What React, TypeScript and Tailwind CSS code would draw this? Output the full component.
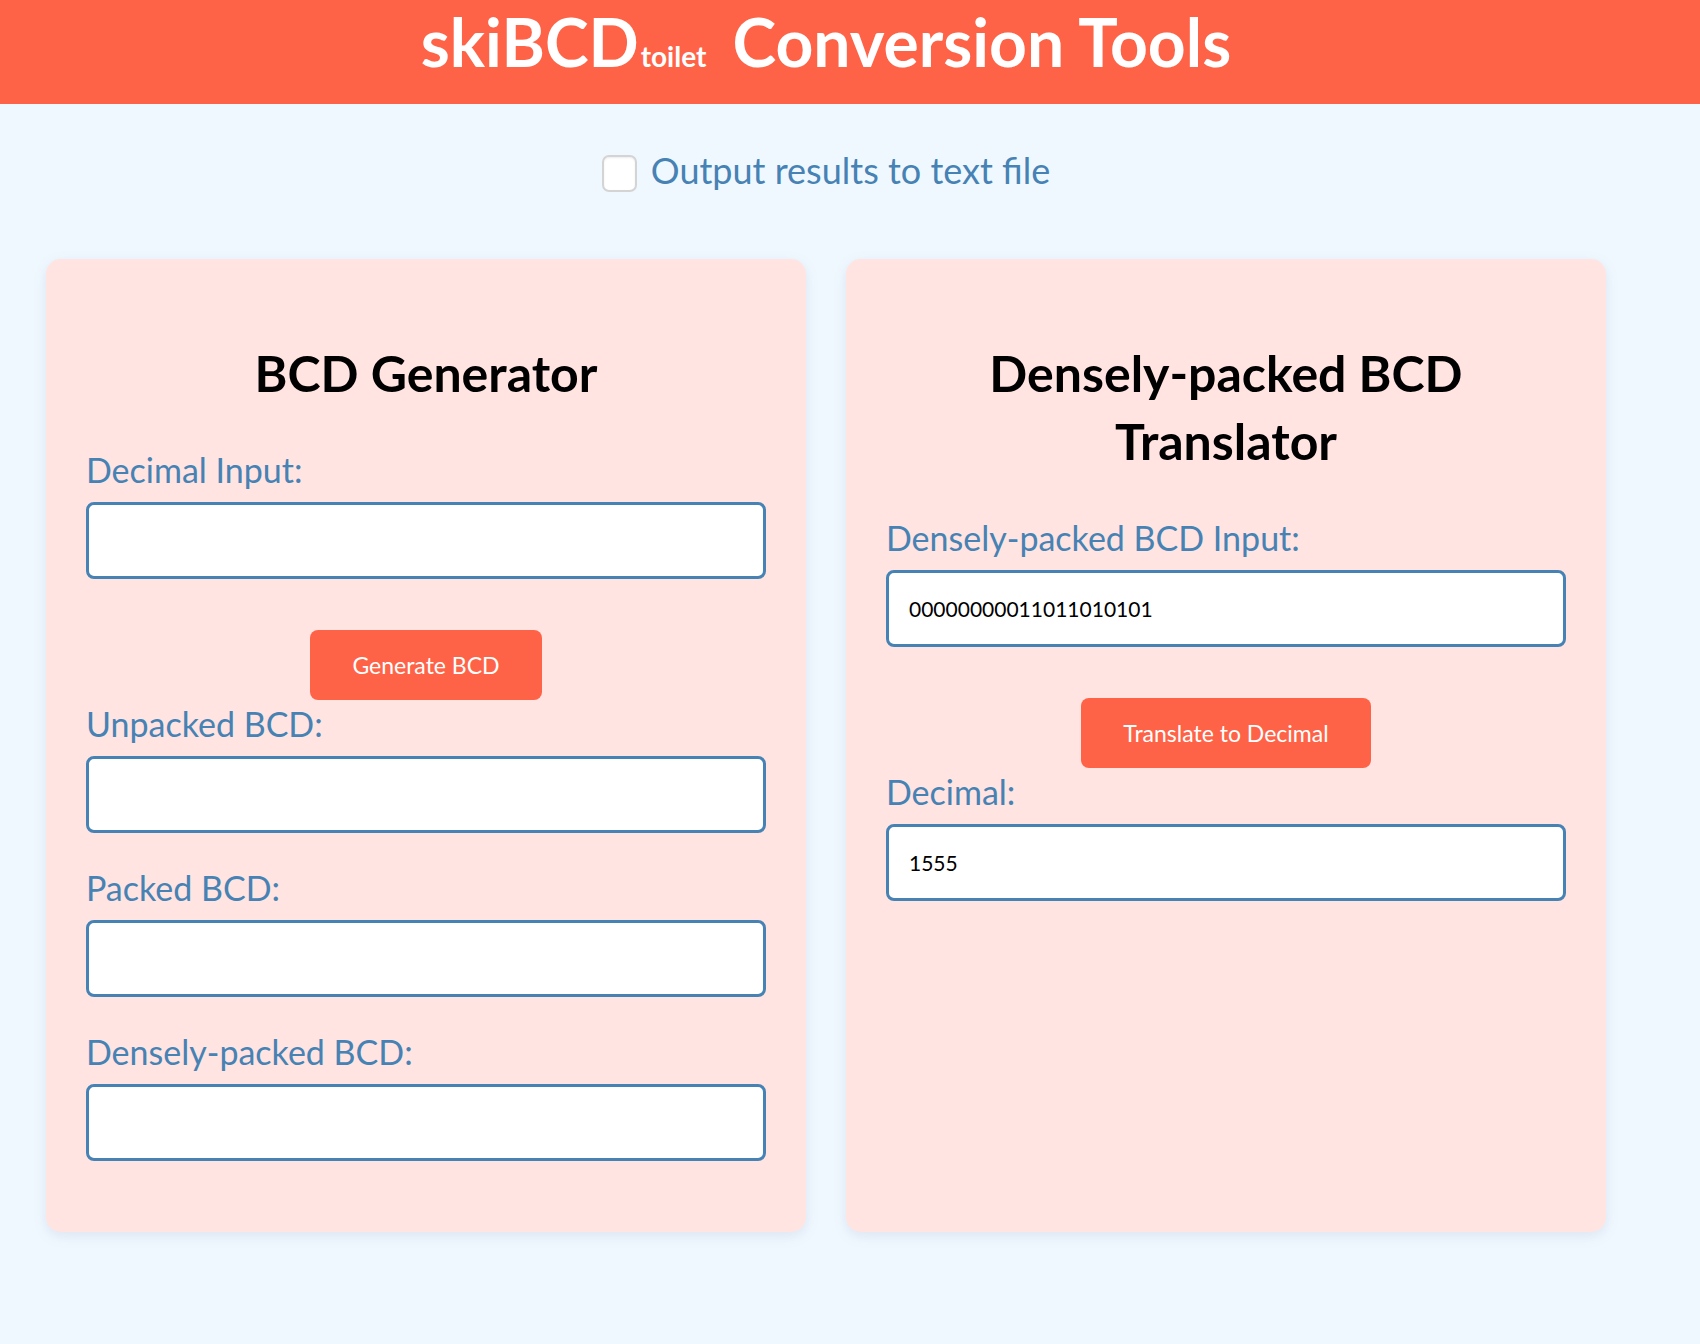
import React, { useState } from "react";

export default function App() {
  const [toFile, setToFile] = useState(false); // output to text file toggle
  const [decimal, setDecimal] = useState("");
  const [unpacked, setUnpacked] = useState("");
  const [packed, setPacked] = useState("");
  const [dense, setDense] = useState("");
  const [dpdInput, setDpdInput] = useState("00000000011011010101");
  const [dpdDecimal, setDpdDecimal] = useState("1555");

  const label = "block text-[34px] leading-[44px] text-[#4682B4]";
  const field =
    "block w-full h-[77px] px-[20px] bg-white border-[3px] border-[#4682B4] rounded-[8px] text-[21px] text-black outline-none";
  const button =
    "h-[70px] px-[42px] bg-[#FF6347] text-white text-[23px] rounded-[8px] cursor-pointer";

  return (
    <div className="min-h-screen bg-[#F0F8FF] font-['Comic_Sans_MS','Lato',sans-serif]">
      {/* Header */}
      <header className="h-[104px] bg-[#FF6347]">
        <div className="w-[1652px] pt-[6px] text-center">
          <h1 className="text-[66px] leading-[72px] font-bold text-white whitespace-nowrap">
            <span>skiBCD</span>
            <span className="text-[28px] ml-[2px]">toilet</span>
            <span className="ml-[26px]">Conversion Tools</span>
          </h1>
        </div>
      </header>

      <div className="w-[1652px] px-[46px]">
        {/* Output checkbox */}
        <div className="flex items-center justify-center gap-[14px] pt-[46px] h-[86px] mb-[69px]">
          <input
            type="checkbox"
            checked={toFile}
            onChange={(e) => setToFile(e.target.checked)}
            className="appearance-none w-[35px] h-[37px] bg-white border-2 border-[#d4d4d4] rounded-[7px] shadow-[inset_0_1px_2px_rgba(0,0,0,0.08)] mt-[6px]"
          />
          <span className="text-[36px] leading-[40px] text-[#4682B4]">Output results to text file</span>
        </div>

        <div className="grid grid-cols-2 gap-[40px]">
          {/* BCD Generator */}
          <section className="bg-[#FFE4E1] rounded-[15px] px-[40px] pt-[80px] pb-[71px] shadow-[0_4px_14px_rgba(70,100,140,0.12)]">
            <h2 className="text-[50px] leading-[68px] font-bold text-black text-center mb-[41px]">BCD Generator</h2>

            <label className={label}>Decimal Input:</label>
            <input className={`${field} mt-[10px]`} value={decimal} onChange={(e) => setDecimal(e.target.value)} />

            <div className="flex justify-center mt-[51px]">
              <button className={button}>Generate BCD</button>
            </div>

            <label className={`${label} mt-[2px]`}>Unpacked BCD:</label>
            <input className={`${field} mt-[10px]`} value={unpacked} onChange={(e) => setUnpacked(e.target.value)} />

            <label className={`${label} mt-[33px]`}>Packed BCD:</label>
            <input className={`${field} mt-[10px]`} value={packed} onChange={(e) => setPacked(e.target.value)} />

            <label className={`${label} mt-[33px]`}>Densely-packed BCD:</label>
            <input className={`${field} mt-[10px]`} value={dense} onChange={(e) => setDense(e.target.value)} />
          </section>

          {/* Densely-packed BCD Translator */}
          <section className="bg-[#FFE4E1] rounded-[15px] px-[40px] pt-[80px] pb-[71px] shadow-[0_4px_14px_rgba(70,100,140,0.12)]">
            <h2 className="text-[50px] leading-[68px] font-bold text-black text-center mb-[41px] px-[60px]">
              Densely-packed BCD Translator
            </h2>

            <label className={label}>Densely-packed BCD Input:</label>
            <input className={`${field} mt-[10px]`} value={dpdInput} onChange={(e) => setDpdInput(e.target.value)} />

            <div className="flex justify-center mt-[51px]">
              <button className={button}>Translate to Decimal</button>
            </div>

            <label className={`${label} mt-[2px]`}>Decimal:</label>
            <input className={`${field} mt-[10px]`} value={dpdDecimal} onChange={(e) => setDpdDecimal(e.target.value)} />
          </section>
        </div>
      </div>
    </div>
  );
}
